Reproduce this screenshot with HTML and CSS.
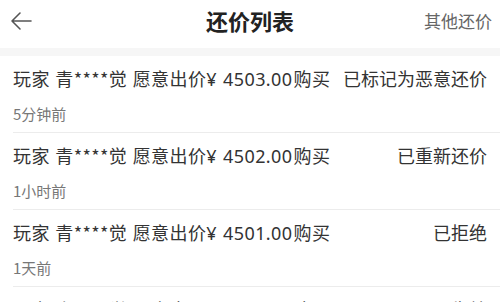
FILE: index.html
```html
<!DOCTYPE html>
<html lang="zh-CN">
<head>
  <meta charset="UTF-8" />
  <meta name="viewport" content="width=device-width, initial-scale=1.0"/>
  <title>还价列表</title>
  <link rel="stylesheet" href="styles.css">
</head>
<body>

  <!-- Top bar -->
  <div class="nav-bar">
    <span class="nav-back">
      <svg width="22" height="20" viewBox="0 0 22 20">
        <path d="M21 10H2M10 2L2 10l8 8" fill="none" stroke="#555" stroke-width="1.6" stroke-linecap="round" stroke-linejoin="round"/>
      </svg>
    </span>
    <span class="nav-title">还价列表</span>
    <span class="nav-right">其他还价</span>
  </div>

  <div class="gap-strip"></div>

  <!-- Offer list -->
  <div class="offer-list">
    <div class="offer-item">
      <div class="offer-line">
        <span class="offer-text">玩家 青****觉 愿意出价<span class="price">¥ 4503.00</span>购买</span>
        <span class="offer-status">已标记为恶意还价</span>
      </div>
      <div class="offer-time">5分钟前</div>
    </div>
    <div class="offer-item">
      <div class="offer-line">
        <span class="offer-text">玩家 青****觉 愿意出价<span class="price">¥ 4502.00</span>购买</span>
        <span class="offer-status">已重新还价</span>
      </div>
      <div class="offer-time">1小时前</div>
    </div>
    <div class="offer-item">
      <div class="offer-line">
        <span class="offer-text">玩家 青****觉 愿意出价<span class="price">¥ 4501.00</span>购买</span>
        <span class="offer-status">已拒绝</span>
      </div>
      <div class="offer-time">1天前</div>
    </div>
    <div class="offer-item">
      <div class="offer-line">
        <span class="offer-text">玩家 青****觉 愿意出价<span class="price">¥ 4500.00</span>购买</span>
        <span class="offer-status">已失效</span>
      </div>
      <div class="offer-time">2天前</div>
    </div>
  </div>

</body>
</html>
```

FILE: styles.css
```css
body {
  margin: 0;
  font-family: "Noto Sans CJK SC", "Noto Sans", sans-serif;
  background: #fff;
  color: #333;
  overflow: hidden;
}

.nav-bar {
  height: 48px;
  display: flex;
  align-items: center;
  justify-content: space-between;
  padding: 0 8px 0 10px;
  position: relative;
}

.nav-back {
  display: flex;
  align-items: center;
  margin-top: -7px;
}

.nav-title {
  position: absolute;
  left: 0;
  right: 0;
  top: 0;
  text-align: center;
  line-height: 40px;
  font-size: 22px;
  font-weight: bold;
  color: #222;
  pointer-events: none;
}

.nav-right {
  font-size: 17px;
  color: #666;
  margin-top: -7px;
}

.gap-strip {
  height: 8px;
  background: #f6f6f6;
}

.offer-list {
  padding-left: 13px;
}

.offer-item {
  border-bottom: 1px solid #ececec;
  padding: 10px 0 8px;
}

.offer-line {
  display: flex;
  justify-content: space-between;
  align-items: center;
  height: 24px;
  padding-right: 13px;
}

.offer-text {
  font-size: 18px;
  letter-spacing: 0.4px;
  word-spacing: 1px;
  color: #333;
}

.price {
  font-family: "Noto Sans", "Noto Sans CJK SC", sans-serif;
  margin-right: 1px;
}

.offer-status {
  font-size: 18px;
  color: #333;
}

.offer-time {
  margin-top: 14px;
  line-height: 20px;
  font-size: 15px;
  color: #777;
}
```
